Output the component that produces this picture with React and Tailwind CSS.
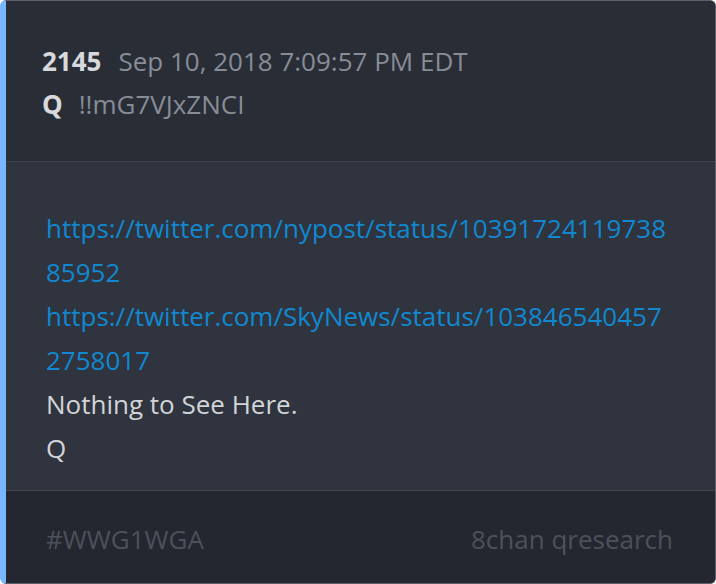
export default function App() {
  return (
    <div className="w-[716px] h-[584px] bg-white" style={{ fontFamily: '"Open Sans", "Noto Sans", sans-serif' }}>
      <div className="w-[716px] h-[584px] flex flex-col rounded-[6px] overflow-hidden border border-[#5c606a] border-l-[6px] border-l-[#78b6ff] bg-[#292d36]">
        <div className="pl-[36px] pr-[42px] pt-[39px] pb-[35px] text-[26px] leading-[43px] border-b border-[#3e424b] bg-[#292d36]">
          <div className="flex gap-[17px]">
            <span className="font-bold text-[#d8d9dc]">2145</span>
            <span className="text-[#878c97]">Sep 10, 2018 7:09:57 PM EDT</span>
          </div>
          <div className="flex gap-[16px]">
            <span className="font-bold text-[#d8d9dc]">Q</span>
            <span className="text-[#878c97]">!!mG7VJxZNCI</span>
          </div>
        </div>
        <div className="flex-1 bg-[#2f343e] pl-[40px] pr-[42px] pt-[44px] text-[26px] leading-[44px] border-b border-[#40444d]">
          <div className="text-[#1188d0] break-all">https://twitter.com/nypost/status/1039172411973885952</div>
          <div className="text-[#1188d0] break-all">https://twitter.com/SkyNews/status/1038465404572758017</div>
          <div className="text-[#d2d4d8]">Nothing to See Here.</div>
          <div className="text-[#d2d4d8]">Q</div>
        </div>
        <div className="h-[92px] bg-[#242730] pl-[40px] pr-[42px] pt-[26px] text-[26px] leading-[44px] flex justify-between text-[#4c515b]">
          <span>#WWG1WGA</span>
          <span>8chan qresearch</span>
        </div>
      </div>
    </div>
  );
}
